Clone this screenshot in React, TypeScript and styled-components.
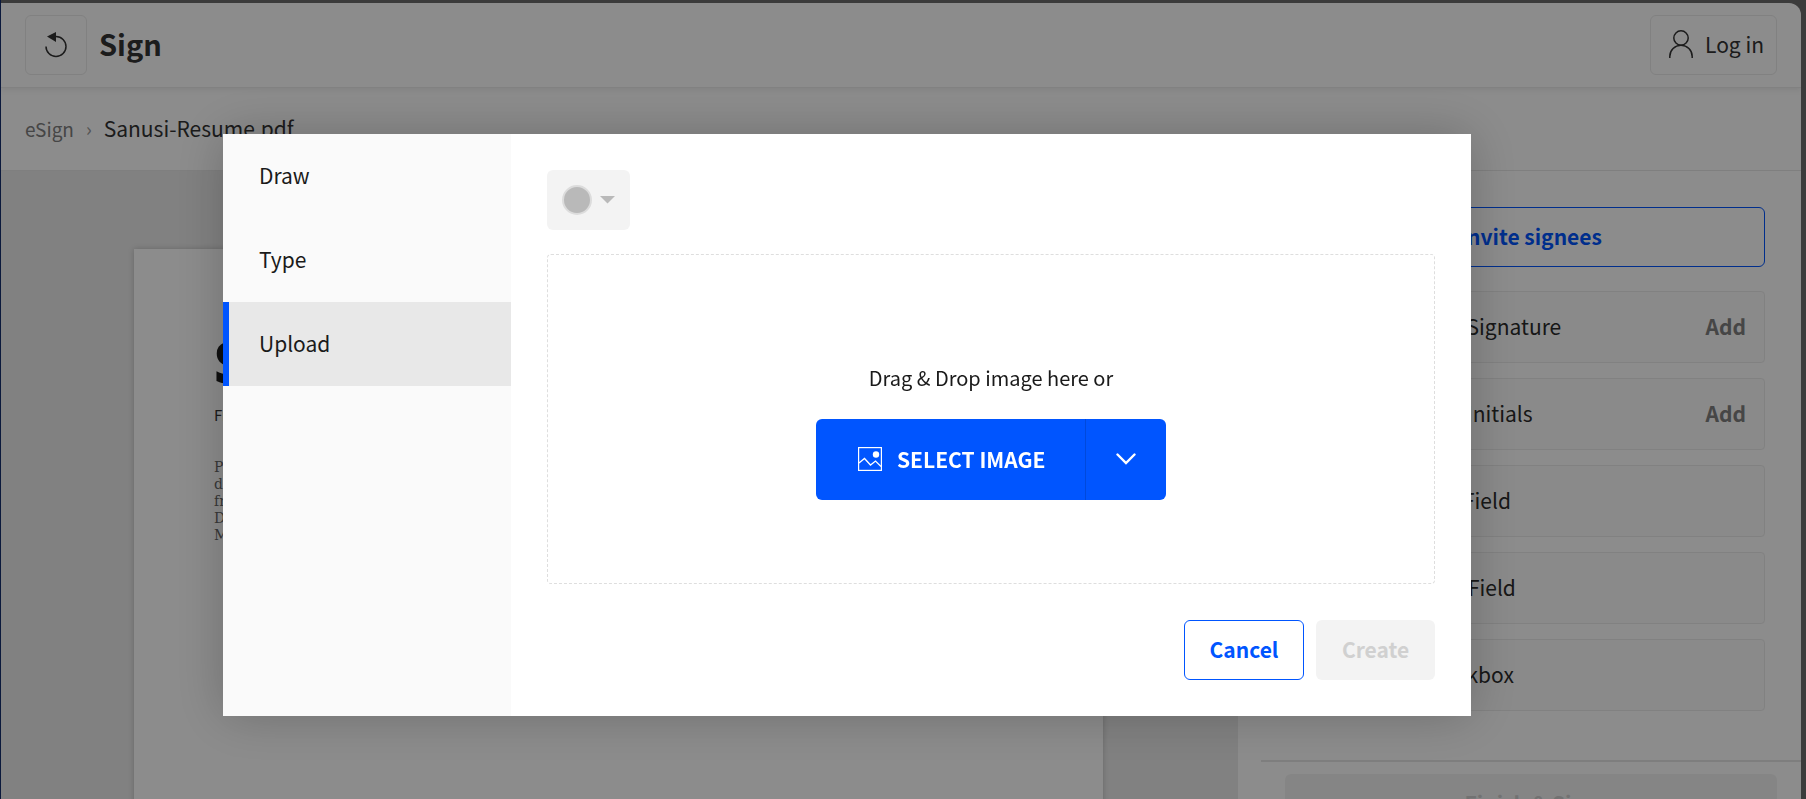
import React from "react";
import styled, { createGlobalStyle, css } from "styled-components";

const GlobalStyle = createGlobalStyle`
  *, *::before, *::after { box-sizing: border-box; }
  html, body, #root { height: 100%; }
  body {
    margin: 0;
    overflow: hidden;
    background: #6c6c6c;
    color: #333;
    font: 400 21px/32px "Noto Sans CJK SC", "Open Sans", sans-serif;
  }
  button { font: inherit; color: inherit; cursor: pointer; margin: 0; }
  p, h1, ul, ol { margin: 0; padding: 0; }
  ul, ol { list-style: none; }
`;

const Frame = styled.div`
  height: 100vh;
  padding: 3px 5px 0 0;
  border-left: 1px solid #142f6e;
`;

const Window = styled.div`
  height: 100%;
  display: flex;
  flex-direction: column;
  overflow: hidden;
  background: #fff;
  border-top-right-radius: 12px;
`;

const Header = styled.header`
  display: flex;
  align-items: center;
  gap: 12px;
  padding: 12px 24px;
  border-bottom: 1px solid #ececec;
  box-shadow: 0 2px 6px rgba(0, 0, 0, 0.08);
`;

const OutlineButton = styled.button<{ $wide?: boolean }>`
  display: flex;
  align-items: center;
  justify-content: center;
  gap: 10px;
  height: 60px;
  width: ${(p) => (p.$wide ? "auto" : "62px")};
  padding: ${(p) => (p.$wide ? "0 12px 2px 16px" : "0")};
  margin-left: ${(p) => (p.$wide ? "auto" : "0")};
  background: transparent;
  border: 1px solid #ebebeb;
  border-radius: 6px;
`;

const Title = styled.h1`
  padding-bottom: 4px;
  font-size: 29px;
  line-height: 40px;
  font-weight: 700;
`;

const Crumbs = styled.nav`
  padding: 0 24px;
  border-bottom: 1px solid #e8e8e8;

  ol {
    display: flex;
    align-items: center;
    gap: 12px;
    height: 82px;
    padding-bottom: 2px;
  }
`;

const CrumbLink = styled.a`
  color: #808080;
  font-size: 19px;
  text-decoration: none;
`;

const CrumbArrow = styled.span`
  color: #999;
  font-size: 19px;
`;

const Body = styled.div`
  flex: 1;
  min-height: 0;
  display: flex;
`;

const Viewer = styled.main`
  flex: 1;
  min-width: 0;
  padding: 78px 135px 0 133px;
  background: #ebebeb;
  overflow: hidden;
`;

const Paper = styled.article`
  height: 1200px;
  padding: 74px 80px;
  background: #fff;
  box-shadow: 0 0 6px rgba(0, 0, 0, 0.2);
`;

const PaperName = styled.h1`
  color: #1c1c1c;
  font: 800 56px/76px "Open Sans", sans-serif;
`;

const PaperRole = styled.p`
  color: #333;
  font-size: 15px;
  line-height: 32px;
`;

const PaperText = styled.p`
  padding-top: 28px;
  color: #666;
  font: 400 14px/17px "DejaVu Serif", serif;
  white-space: pre-line;
`;

const Side = styled.aside`
  flex: none;
  width: 563px;
  display: flex;
  flex-direction: column;
  padding-left: 23px;
`;

const SideTop = styled.div`
  flex: 1;
  display: flex;
  flex-direction: column;
  gap: 24px;
  padding: 36px 36px 0;
`;

const InviteButton = styled.button`
  height: 60px;
  padding: 0 0 2px;
  color: #0055ff;
  font-weight: 700;
  background: transparent;
  border: 1px solid #0055ff;
  border-radius: 6px;
`;

const FieldList = styled.ul`
  display: flex;
  flex-direction: column;
  gap: 15px;
`;

const FieldRow = styled.li`
  display: flex;
  align-items: center;
  height: 72px;
  padding: 0 18px 2px 120px;
  background: #fcfcfc;
  border: 1px solid #ebebeb;
  border-radius: 4px;
  color: #2b2b2b;
`;

const AddButton = styled.button`
  margin-left: auto;
  padding: 0;
  border: 0;
  background: none;
  color: #808080;
  font-weight: 700;
`;

const SideFooter = styled.footer`
  padding: 12px 24px 0;
  height: 39px;
  border-top: 2px solid #e6e6e6;
`;

const FinishButton = styled.button`
  width: 100%;
  height: 60px;
  padding: 0 0 2px;
  color: #d0d0d0;
  font-weight: 700;
  background: #f3f3f3;
  border: 0;
  border-radius: 6px;
`;

const Overlay = styled.div`
  position: fixed;
  inset: 0;
  display: flex;
  align-items: flex-start;
  padding: 134px 335px 0 223px;
  background: rgba(0, 0, 0, 0.45);
`;

const Modal = styled.div`
  flex: 1;
  min-width: 0;
  display: flex;
  background: #fff;
  color: #1a1a1a;
  box-shadow: 0 0 48px rgba(0, 0, 0, 0.22);
`;

const Tabs = styled.div`
  flex: none;
  width: 288px;
  background: #fafafa;
`;

const Tab = styled.button<{ $active?: boolean }>`
  display: block;
  width: 100%;
  height: 84px;
  padding: 0 30px 2px;
  text-align: left;
  border: 0;
  border-left: 6px solid transparent;
  background: none;
  ${(p) =>
    p.$active &&
    css`
      border-left-color: #0055ff;
      background: #e8e8e8;
    `}
`;

const Panel = styled.section`
  flex: 1;
  min-width: 0;
  display: flex;
  flex-direction: column;
  align-items: flex-start;
  padding: 36px;
`;

const ColorButton = styled.button`
  display: flex;
  align-items: center;
  gap: 8px;
  width: 83px;
  height: 60px;
  padding: 0 15px;
  border: 0;
  border-radius: 6px;
  background: #f3f3f3;
`;

const Swatch = styled.span`
  width: 30px;
  height: 30px;
  border: 2px solid #dcdcdc;
  border-radius: 50%;
  background: #b9b9b9;
`;

const DropZone = styled.div`
  align-self: stretch;
  display: flex;
  flex-direction: column;
  align-items: center;
  margin: 24px 0 36px;
  padding: 84px 0 83px;
  border: 1px dashed #dedede;
  border-radius: 4px;
`;

const DropText = styled.p`
  padding: 23px 0 25px;
  font-size: 20px;
`;

const SplitButton = styled.div`
  display: flex;
  height: 81px;
  color: #fff;
  background: #0055ff;
  border-radius: 6px;
  overflow: hidden;
`;

const SelectButton = styled.button`
  display: flex;
  align-items: center;
  gap: 15px;
  width: 270px;
  padding: 0 0 2px 42px;
  border: 0;
  border-right: 1px solid #0049dc;
  background: none;
  font-weight: 700;
`;

const MoreButton = styled.button`
  display: flex;
  align-items: center;
  justify-content: center;
  width: 80px;
  padding: 0 0 2px;
  border: 0;
  background: none;
`;

const Actions = styled.div`
  align-self: flex-end;
  display: flex;
  gap: 12px;
`;

const ActionButton = styled.button<{ $primary?: boolean }>`
  width: ${(p) => (p.$primary ? "119px" : "120px")};
  height: 60px;
  padding: 0 0 2px;
  font-weight: 700;
  border-radius: 6px;
  border: ${(p) => (p.$primary ? "0" : "1px solid #0055ff")};
  color: ${(p) => (p.$primary ? "#d0d0d0" : "#0055ff")};
  background: ${(p) => (p.$primary ? "#f3f3f3" : "#fff")};
`;

const UndoIcon = () => (
  <svg width="24" height="28" viewBox="0 0 24 28" fill="none" aria-hidden="true">
    <path d="M2 15.500A10 10 0 1 0 12 5.500" stroke="#333" strokeWidth="1.500" />
    <path d="M3 5.500L12 1V11Z" fill="#333" />
  </svg>
);

const UserIcon = () => (
  <svg width="28" height="30" viewBox="0 0 28 30" fill="none" stroke="#333" strokeWidth="1.500" aria-hidden="true">
    <circle cx="14" cy="9" r="7.200" />
    <path d="M2.800 29V27.500A11.200 11.200 0 0 1 25.200 27.500V29" />
  </svg>
);

const ImageIcon = () => (
  <svg width="24" height="24" viewBox="0 0 24 24" fill="none" stroke="#fff" aria-hidden="true">
    <rect x=".6" y=".6" width="22.800" height="22.800" strokeWidth="1.200" />
    <path d="M1 16L6.500 11.500L12.500 18L17.500 14L23 19.500" strokeWidth="1.300" />
    <circle cx="18" cy="7.500" r="3.200" fill="#fff" stroke="none" />
  </svg>
);

const fields = [
  { label: "Your Signature", add: true },
  { label: "Your Initials", add: true },
  { label: "Text Field" },
  { label: "Date Field" },
  { label: "Checkbox" },
];

export default function App() {
  return (
    <>
      <GlobalStyle />
      <Frame>
        <Window>
          <Header>
            <OutlineButton aria-label="Back">
              <UndoIcon />
            </OutlineButton>
            <Title>Sign</Title>
            <OutlineButton $wide>
              <UserIcon />
              Log in
            </OutlineButton>
          </Header>
          <Crumbs aria-label="Breadcrumb">
            <ol>
              <li>
                <CrumbLink href="#esign">eSign</CrumbLink>
              </li>
              <CrumbArrow as="li" aria-hidden="true">›</CrumbArrow>
              <li>Sanusi-Resume.pdf</li>
            </ol>
          </Crumbs>
          <Body>
            <Viewer>
              <Paper>
                <PaperName>Sanusi</PaperName>
                <PaperRole>Front</PaperRole>
                <PaperText>{"Product\ndesign\nfrom\nDesk\nMobile"}</PaperText>
              </Paper>
            </Viewer>
            <Side>
              <SideTop>
                <InviteButton>Invite signees</InviteButton>
                <FieldList>
                  {fields.map((f) => (
                    <FieldRow key={f.label}>
                      {f.label}
                      {f.add && <AddButton>Add</AddButton>}
                    </FieldRow>
                  ))}
                </FieldList>
              </SideTop>
              <SideFooter>
                <FinishButton disabled>Finish &amp; Sign</FinishButton>
              </SideFooter>
            </Side>
          </Body>
        </Window>
      </Frame>
      <Overlay>
        <Modal role="dialog" aria-modal="true" aria-label="Create signature">
          <Tabs role="tablist">
            <Tab role="tab" aria-selected={false}>Draw</Tab>
            <Tab role="tab" aria-selected={false}>Type</Tab>
            <Tab role="tab" aria-selected $active>Upload</Tab>
          </Tabs>
          <Panel>
            <ColorButton disabled aria-label="Color">
              <Swatch />
              <svg width="15" height="8" viewBox="0 0 15 8" aria-hidden="true">
                <path d="M0 0H15L7.500 7.500Z" fill="#b9b9b9" />
              </svg>
            </ColorButton>
            <DropZone>
              <DropText>Drag &amp; Drop image here or</DropText>
              <SplitButton>
                <SelectButton>
                  <ImageIcon />
                  SELECT IMAGE
                </SelectButton>
                <MoreButton aria-label="More sources">
                  <svg width="20" height="12" viewBox="0 0 20 12" fill="none" stroke="#fff" strokeWidth="2.400" strokeLinecap="round" aria-hidden="true">
                    <path d="M1.500 1.500L10 10L18.500 1.500" />
                  </svg>
                </MoreButton>
              </SplitButton>
            </DropZone>
            <Actions>
              <ActionButton>Cancel</ActionButton>
              <ActionButton $primary disabled>Create</ActionButton>
            </Actions>
          </Panel>
        </Modal>
      </Overlay>
    </>
  );
}
